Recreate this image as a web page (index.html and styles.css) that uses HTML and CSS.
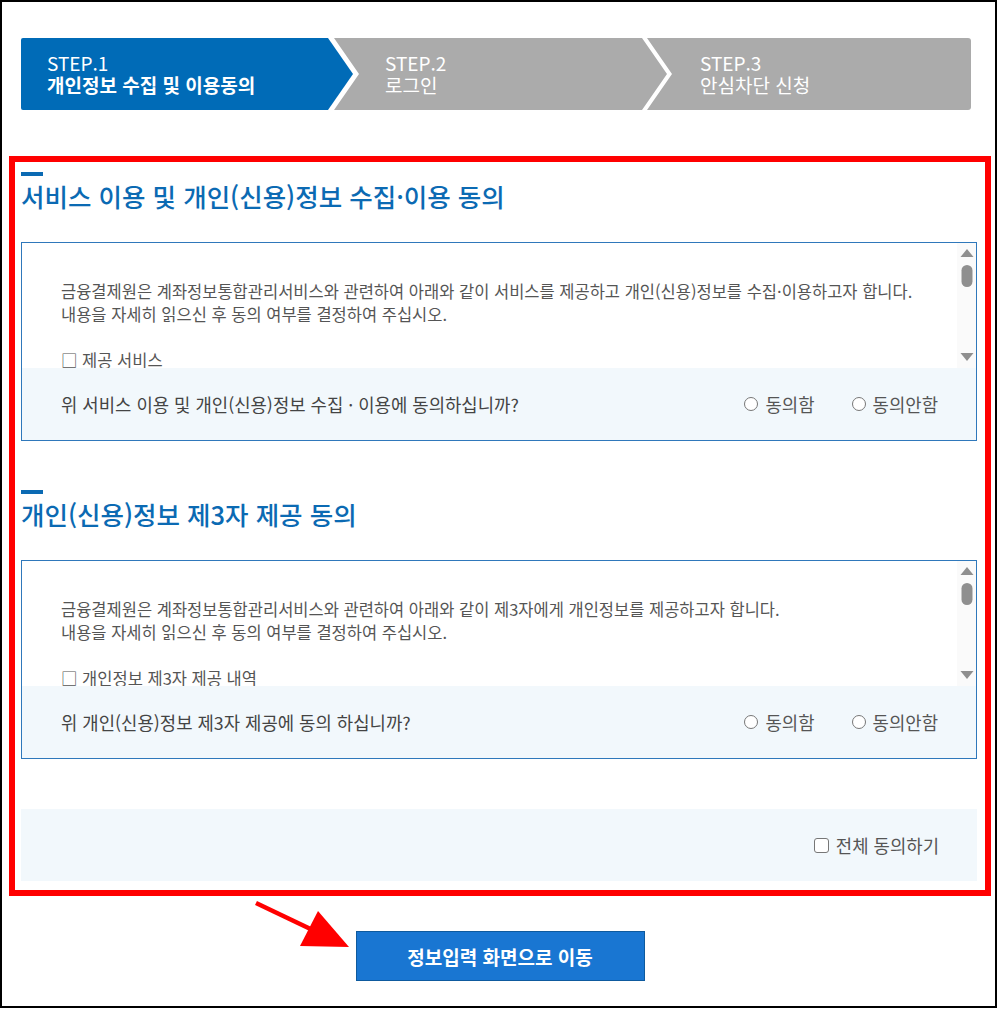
FILE: index.html
```html
<!DOCTYPE html>
<html lang="ko">
<head>
    <meta charset="UTF-8">
    <meta name="viewport" content="width=device-width, initial-scale=1.0">
    <title>계좌정보통합관리서비스 - 안심차단 신청</title>
    <link rel="stylesheet" href="styles.css">
</head>
<body>
    <div class="frame">
        <!-- 단계 표시 -->
        <ol class="steps">
            <li class="step step-on">
                <span class="step-num">STEP.1</span>
                <strong class="step-name">개인정보 수집 및 이용동의</strong>
            </li>
            <li class="step">
                <span class="step-num">STEP.2</span>
                <span class="step-name">로그인</span>
            </li>
            <li class="step step-last">
                <span class="step-num">STEP.3</span>
                <span class="step-name">안심차단 신청</span>
            </li>
        </ol>

        <div class="agree-wrap">
            <!-- 동의 1 -->
            <section class="agree">
                <h2 class="agree-title">서비스 이용 및 개인(신용)정보 수집·이용 동의</h2>
                <div class="agree-box">
                    <div class="terms">
                        <div class="terms-text">
                            <p>금융결제원은 계좌정보통합관리서비스와 관련하여 아래와 같이 서비스를 제공하고 개인(신용)정보를 수집·이용하고자 합니다.<br>내용을 자세히 읽으신 후 동의 여부를 결정하여 주십시오.</p>
                            <p class="terms-sub">□ 제공 서비스</p>
                            <p>- 계좌정보통합관리서비스(어카운트인포) 조회 및 안심차단 신청</p>
                        </div>
                        <div class="scrollbar">
                            <svg width="19" height="125" viewBox="0 0 19 125">
                                <polygon points="10,6 16.5,14 3.5,14" fill="#8f8f8f"/>
                                <rect x="4.5" y="22" width="11" height="22" rx="5.5" fill="#8f8f8f"/>
                                <polygon points="3.5,110 16.5,110 10,118" fill="#8f8f8f"/>
                            </svg>
                        </div>
                    </div>
                    <div class="agree-ask">
                        <p>위 서비스 이용 및 개인(신용)정보 수집 · 이용에 동의하십니까?</p>
                        <div class="radios">
                            <label class="radio-item"><span class="radio"></span>동의함</label>
                            <label class="radio-item"><span class="radio"></span>동의안함</label>
                        </div>
                    </div>
                </div>
            </section>

            <!-- 동의 2 -->
            <section class="agree agree-next">
                <h2 class="agree-title">개인(신용)정보 제3자 제공 동의</h2>
                <div class="agree-box">
                    <div class="terms">
                        <div class="terms-text">
                            <p>금융결제원은 계좌정보통합관리서비스와 관련하여 아래와 같이 제3자에게 개인정보를 제공하고자 합니다.<br>내용을 자세히 읽으신 후 동의 여부를 결정하여 주십시오.</p>
                            <p class="terms-sub">□ 개인정보 제3자 제공 내역</p>
                            <p>- 제공받는 자 : 계좌 개설 금융회사</p>
                        </div>
                        <div class="scrollbar">
                            <svg width="19" height="125" viewBox="0 0 19 125">
                                <polygon points="10,6 16.5,14 3.5,14" fill="#8f8f8f"/>
                                <rect x="4.5" y="22" width="11" height="22" rx="5.5" fill="#8f8f8f"/>
                                <polygon points="3.5,110 16.5,110 10,118" fill="#8f8f8f"/>
                            </svg>
                        </div>
                    </div>
                    <div class="agree-ask">
                        <p>위 개인(신용)정보 제3자 제공에 동의 하십니까?</p>
                        <div class="radios">
                            <label class="radio-item"><span class="radio"></span>동의함</label>
                            <label class="radio-item"><span class="radio"></span>동의안함</label>
                        </div>
                    </div>
                </div>
            </section>

            <!-- 전체 동의 -->
            <div class="agree-all">
                <label class="check-item"><span class="check"></span>전체 동의하기</label>
            </div>
        </div>

        <div class="actions">
            <button class="btn-next">정보입력 화면으로 이동</button>
            <svg class="pointer" width="360" height="60" viewBox="0 0 360 60">
                <line x1="247" y1="7" x2="312" y2="38" stroke="#ff0000" stroke-width="4.5"/>
                <polygon points="309,15 340,51 291,50" fill="#ff0000"/>
            </svg>
        </div>
    </div>
</body>
</html>
```

FILE: styles.css
```css
/* 기본 */
body {
    margin: 0;
    background-color: #fff;
    font-family: "Noto Sans CJK KR", "Noto Sans", sans-serif;
    color: #555;
}

p {
    margin: 0;
}

/* 바깥 테두리 */
.frame {
    box-sizing: border-box;
    width: 997px;
    height: 1008px;
    border: 2px solid #000;
    padding: 36px 4px 0 7px;
}

/* 단계 표시 */
.steps {
    display: flex;
    list-style: none;
    margin: 0 20px 0 12px;
    padding: 0;
    height: 72px;
}

.step {
    display: flex;
    flex-direction: column;
    justify-content: center;
    box-sizing: border-box;
    width: 333px;
    margin-left: -19px;
    padding-left: 51px;
    background-color: #ababab;
    color: #fff;
    font-size: 19px;
    line-height: 22px;
    clip-path: polygon(0 0, calc(100% - 25px) 0, 100% 50%, calc(100% - 25px) 100%, 0 100%, 25px 50%);
}

.step-on {
    width: 332px;
    margin-left: 0;
    padding-left: 26px;
    background-color: #006bb7;
    border-radius: 2px 0 0 2px;
    clip-path: polygon(0 0, calc(100% - 25px) 0, 100% 50%, calc(100% - 25px) 100%, 0 100%);
}

.step-last {
    flex: 1;
    margin-left: -20px;
    padding-left: 53px;
    border-radius: 0 3px 3px 0;
    clip-path: polygon(0 0, 100% 0, 100% 100%, 0 100%, 25px 50%);
}

.step-name {
    font-weight: normal;
}

.step-on .step-name {
    font-weight: bold;
}

/* 빨간 강조 영역 */
.agree-wrap {
    border: 6px solid #ff0000;
    margin-top: 46px;
    padding: 10px 8px 9px 6px;
}

.agree-next {
    margin-top: 49px;
}

.agree-title {
    margin: 0 0 30px;
    color: #0b6ab3;
    font-size: 25.5px;
    font-weight: 500;
    line-height: 32px;
}

.agree-title::before {
    content: "";
    display: block;
    width: 22px;
    height: 4px;
    margin-bottom: 4px;
    background-color: #0b6ab3;
}

.agree-box {
    border: 1px solid #2f78bb;
}

/* 약관 스크롤 영역 */
.terms {
    display: flex;
    height: 125px;
    overflow: hidden;
}

.terms-text {
    flex: 1;
    padding: 37px 8px 0 39px;
    font-size: 16.5px;
    line-height: 23px;
    color: #555;
}

.terms-sub {
    margin-top: 23px;
}

.scrollbar {
    width: 19px;
    background-color: #fafafa;
}

.scrollbar svg {
    display: block;
}

/* 동의 여부 */
.agree-ask {
    display: flex;
    align-items: center;
    justify-content: space-between;
    height: 72px;
    padding: 0 38px 0 39px;
    background-color: #f2f8fc;
    font-size: 17.8px;
    color: #444;
}

.radios {
    display: flex;
    gap: 37px;
}

.radio-item,
.check-item {
    display: flex;
    align-items: center;
    gap: 7px;
    color: #555;
}

.radio {
    box-sizing: border-box;
    width: 14px;
    height: 14px;
    border: 1.5px solid #777;
    border-radius: 50%;
    background-color: #fff;
}

/* 전체 동의 */
.agree-all {
    display: flex;
    align-items: center;
    justify-content: flex-end;
    height: 72px;
    margin-top: 50px;
    padding-right: 38px;
    background-color: #f2f8fc;
    font-size: 17.8px;
}

.check {
    box-sizing: border-box;
    width: 15px;
    height: 15px;
    border: 1.5px solid #777;
    border-radius: 3px;
    background-color: #fff;
}

/* 하단 버튼 */
.actions {
    position: relative;
    display: flex;
    justify-content: center;
    padding-top: 35px;
}

.btn-next {
    width: 289px;
    height: 50px;
    border: 1px solid #0e5a9e;
    background-color: #1976d2;
    color: #fff;
    font-family: inherit;
    font-size: 19px;
    font-weight: bold;
    cursor: pointer;
}

.pointer {
    position: absolute;
    left: 0;
    top: 0;
}
```
